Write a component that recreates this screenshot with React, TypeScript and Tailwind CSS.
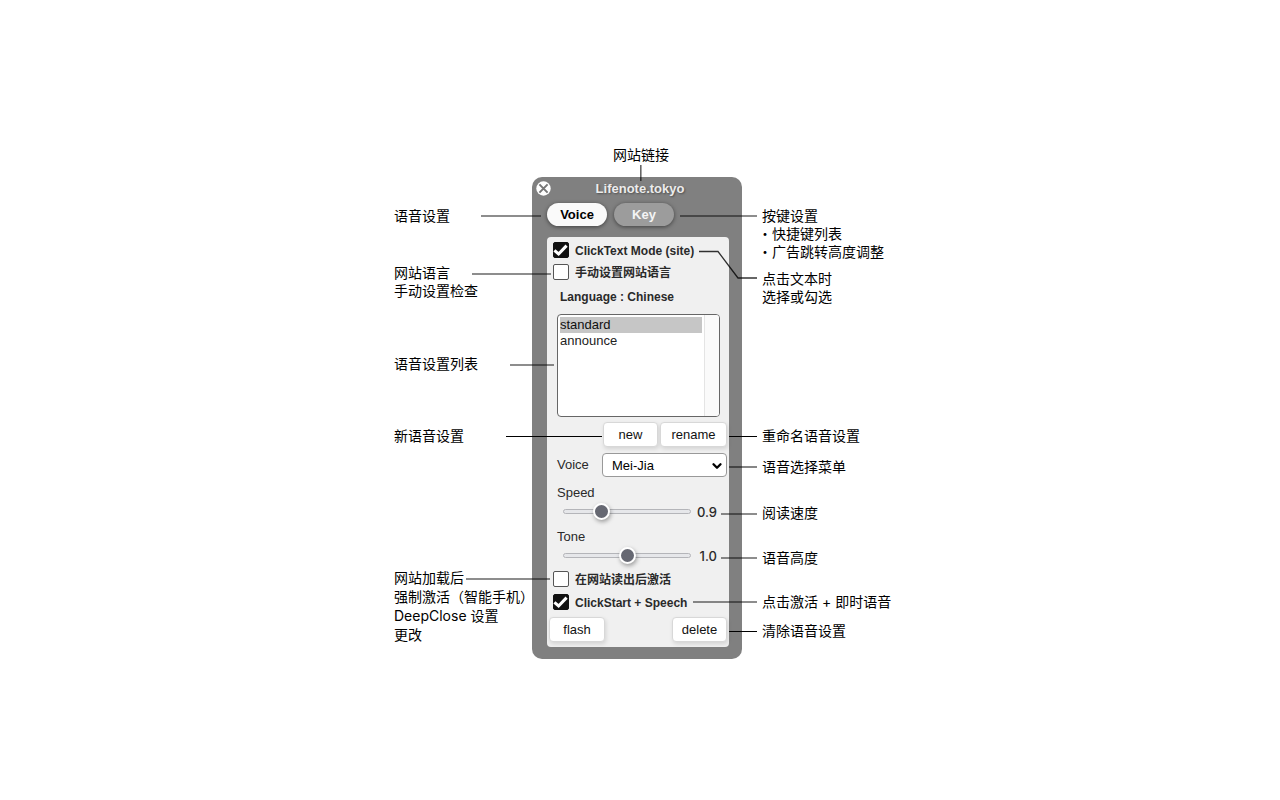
import { ChevronDown } from "lucide-react";
import React, { useState } from "react";

const Note = ({
	lines,
	className = "",
}: {
	lines: string[];
	className?: string;
}) => (
	<div className={`whitespace-nowrap ${className}`}>
		{lines.map((line) => (
			<p key={line}>{line}</p>
		))}
	</div>
);

const CheckRow = ({
	id,
	label,
	defaultChecked = false,
}: {
	id: string;
	label: string;
	defaultChecked?: boolean;
}) => (
	<div className="flex h-4 items-center gap-1.5 pl-1.5">
		<span className="relative flex size-4">
			<input
				id={id}
				type="checkbox"
				defaultChecked={defaultChecked}
				className="peer size-4 appearance-none rounded-xs border border-[#555] bg-white checked:border-[#111] checked:bg-[#111]"
			/>
			<svg
				viewBox="0 0 16 16"
				className="pointer-events-none absolute inset-0 hidden size-4 peer-checked:block"
			>
				<path
					d="M1.4 8.4 L5.6 12 L13.6 3.6"
					fill="none"
					stroke="#fff"
					strokeWidth="3"
				/>
			</svg>
		</span>
		<label htmlFor={id} className="pt-0.5 text-xs font-bold whitespace-nowrap">
			{label}
		</label>
	</div>
);

const SliderRow = ({
	id,
	label,
	min,
	max,
	initial,
}: {
	id: string;
	label: string;
	min: number;
	max: number;
	initial: number;
}) => {
	const [value, setValue] = useState(initial);

	return (
		<div>
			<label htmlFor={id} className="block pl-2.5 text-[13px] leading-4">
				{label}
			</label>
			<div className="mt-0.5 flex h-[17px] items-center justify-between pr-3 pl-4">
				<input
					id={id}
					type="range"
					min={min}
					max={max}
					step={0.1}
					value={value}
					onChange={(e) => setValue(Number(e.target.value))}
					className="h-[5px] w-32 appearance-none rounded-full border border-[#b4b5b9] bg-[#e6e7ea] [&::-webkit-slider-thumb]:size-[17px] [&::-webkit-slider-thumb]:appearance-none [&::-webkit-slider-thumb]:rounded-full [&::-webkit-slider-thumb]:border-2 [&::-webkit-slider-thumb]:border-white [&::-webkit-slider-thumb]:bg-[#666872] [&::-webkit-slider-thumb]:shadow-[1px_2px_4px_rgba(0,0,0,0.35)]"
				/>
				<output
					htmlFor={id}
					className="font-['Inter',sans-serif] text-[13px] leading-4 font-medium"
				>
					{value.toFixed(1)}
				</output>
			</div>
		</div>
	);
};

const PushButton = ({
	children,
	className = "",
}: {
	children: React.ReactNode;
	className?: string;
}) => (
	<button
		type="button"
		className={`h-[25px] rounded border border-[#d8d8d8] bg-white text-[13px] leading-4 text-[#111] shadow-[1px_2px_4px_rgba(0,0,0,0.12)] ${className}`}
	>
		{children}
	</button>
);

const Panel = () => (
	<section className="rounded-[10px] bg-[#808080] pr-[13px] pb-3 pl-[15px] font-['Liberation_Sans','Noto_Sans_CJK_SC',sans-serif] text-[#2a2a2a]">
		<header className="-ml-[11px] flex h-[22px] items-center">
			<button type="button" aria-label="Close" className="size-[15px]">
				<svg viewBox="0 0 15 15" className="size-[15px]">
					<circle cx="7.5" cy="7.5" r="7.2" fill="#fff" />
					<path
						d="M3.4 3.4 L11.6 11.6 M11.6 3.4 L3.4 11.6"
						stroke="#777"
						strokeWidth="2"
					/>
				</svg>
			</button>
			<a
				href="#site"
				className="flex-1 pt-0.5 text-center text-[13px] font-bold text-[#ececec] [text-shadow:1px_1px_2px_rgba(0,0,0,0.4)]"
			>
				Lifenote.tokyo
			</a>
		</header>
		<div className="mt-1 flex gap-[7px] text-[13px] font-bold">
			<button
				type="button"
				className="h-[23px] w-[60px] rounded-full bg-[#fafafa] text-black shadow-[0_1px_4px_rgba(0,0,0,0.5)]"
			>
				Voice
			</button>
			<button
				type="button"
				className="h-[23px] w-[60px] rounded-full bg-[#9c9c9c] text-[#f4f4f4] shadow-[0_1px_4px_rgba(0,0,0,0.5)]"
			>
				Key
			</button>
		</div>
		<form className="mt-[11px] rounded bg-[#f0f0f0] pt-[5px] pb-[5px]">
			<div className="flex flex-col gap-1.5">
				<CheckRow id="clicktext" label="ClickText Mode (site)" defaultChecked />
				<CheckRow id="manual" label="手动设置网站语言" />
			</div>
			<label
				htmlFor="presets"
				className="mt-[9px] block pl-[13px] text-xs leading-4 font-bold"
			>
				Language : Chinese
			</label>
			<div className="mt-[9px] mr-[9px] ml-2.5 flex h-[103px] overflow-hidden rounded border border-[#666] bg-white">
				<select
					id="presets"
					size={6}
					defaultValue="standard"
					className="min-w-0 flex-1 appearance-none overflow-hidden p-0.5 text-[13px] text-[#222] outline-none"
				>
					<option
						value="standard"
						className="h-4 p-0 leading-4 checked:bg-[linear-gradient(#c6c6c6,#c6c6c6)]"
					>
						standard
					</option>
					<option
						value="announce"
						className="h-4 p-0 leading-4 checked:bg-[linear-gradient(#c6c6c6,#c6c6c6)]"
					>
						announce
					</option>
				</select>
				<div className="w-[15px] border-l border-[#e4e4e4] bg-[#fafafa]" />
			</div>
			<div className="mt-[5px] flex justify-end gap-0.5 pr-0.5">
				<PushButton className="w-[55px]">new</PushButton>
				<PushButton className="w-[67px]">rename</PushButton>
			</div>
			<div className="mt-1.5 flex items-center justify-between pr-0.5 pl-2.5">
				<label htmlFor="voice" className="text-[13px] leading-4">
					Voice
				</label>
				<div className="relative">
					<select
						id="voice"
						className="block h-6 w-[125px] appearance-none rounded border border-[#999] bg-white pt-px pl-[9px] text-[13px] text-black"
					>
						<option>Mei-Jia</option>
					</select>
					<ChevronDown
						className="pointer-events-none absolute top-1.5 right-[3px] size-3.5"
						stroke="#000"
						strokeWidth={4}
					/>
				</div>
			</div>
			<div className="mt-2 flex flex-col gap-[9px]">
				<SliderRow id="speed" label="Speed" min={0.5} max={2} initial={0.9} />
				<SliderRow id="tone" label="Tone" min={0} max={2} initial={1} />
			</div>
			<div className="mt-[7px] flex flex-col gap-[7px]">
				<CheckRow id="after-load" label="在网站读出后激活" />
				<CheckRow id="clickstart" label="ClickStart + Speech" defaultChecked />
				<div className="flex justify-between px-0.5">
					<PushButton className="w-14">flash</PushButton>
					<PushButton className="w-[55px]">delete</PushButton>
				</div>
			</div>
		</form>
	</section>
);

// leader lines between the notes and the panel controls
const Leaders = () => (
	<svg
		viewBox="390 144 500 515"
		className="pointer-events-none absolute top-0 left-0 h-[515px] w-[500px]"
		fill="none"
	>
		<g stroke="#000" strokeOpacity="0.6" strokeWidth="1.6">
			<path d="M640.8 165V181" />
			<path d="M481 216H541" />
			<path d="M680 216H757" />
			<path d="M472 274H551" />
			<path d="M510 365H554" />
			<path d="M729 467H757" />
			<path d="M721 514H757" />
			<path d="M721 558H757" />
			<path d="M466 579H550" />
			<path d="M693 602H757" />
		</g>
		<g stroke="#000">
			<path d="M699 251.5H718L738 278H757" strokeWidth="1.3" strokeOpacity="0.8" />
			<path d="M506 436.5H602" />
			<path d="M729 436.5H757" />
			<path d="M729 631.5H757" />
		</g>
	</svg>
);

const App = () => {
	return (
		<main className="flex min-h-screen justify-center bg-white pt-36 pb-8">
			<div className="relative grid grid-cols-[142px_210px_148px] self-start font-['Inter','Noto_Sans_CJK_SC',sans-serif] text-sm leading-[18px] text-black">
				<Note
					className="col-start-2 mb-[11px] pl-2 text-center leading-[22px]"
					lines={["网站链接"]}
				/>
				<div className="col-start-1 row-start-2 pl-1">
					<Note className="mt-[30px]" lines={["语音设置"]} />
					<Note className="mt-[39px]" lines={["网站语言", "手动设置检查"]} />
					<Note className="mt-[55px]" lines={["语音设置列表"]} />
					<Note className="mt-[54px]" lines={["新语音设置"]} />
					<Note
						className="mt-[123px] leading-[19px]"
						lines={[
							"网站加载后",
							"强制激活（智能手机）",
							"DeepClose 设置",
							"更改",
						]}
					/>
				</div>
				<div className="col-start-2 row-start-2">
					<Panel />
				</div>
				<div className="col-start-3 row-start-2 pl-5">
					<Note className="mt-[30px]" lines={["按键设置"]} />
					<Note
						className="-ml-1"
						lines={["・快捷键列表", "・广告跳转高度调整"]}
					/>
					<Note className="mt-[9px]" lines={["点击文本时", "选择或勾选"]} />
					<Note className="mt-[121px]" lines={["重命名语音设置"]} />
					<Note className="mt-[13px]" lines={["语音选择菜单"]} />
					<Note className="mt-7" lines={["阅读速度"]} />
					<Note className="mt-[27px]" lines={["语音高度"]} />
					<Note className="mt-[26px]" lines={["点击激活 + 即时语音"]} />
					<Note className="mt-[11px]" lines={["清除语音设置"]} />
				</div>
				<Leaders />
			</div>
		</main>
	);
};

export default App;
